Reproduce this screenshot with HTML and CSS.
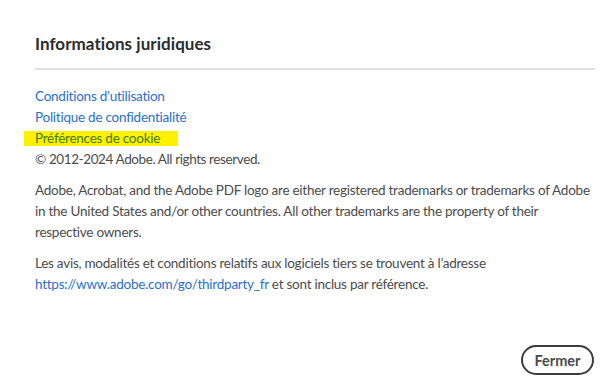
FILE: index.html
```html
<!DOCTYPE html>
<html lang="fr">
<head>
<meta charset="utf-8">
<title>Informations juridiques</title>
<link rel="stylesheet" href="styles.css">
</head>
<body>
<div class="dialog">
  <h1 class="title">Informations juridiques</h1>
  <hr class="divider">
  <div class="content">
    <ul class="links">
      <li><a href="#">Conditions d’utilisation</a></li>
      <li><a href="#">Politique de confidentialité</a></li>
      <li><a href="#" class="hl">Préférences de cookie</a></li>
    </ul>
    <p class="copy">© 2012-2024 Adobe. All rights reserved.</p>
    <p class="para">Adobe, Acrobat, and the Adobe PDF logo are either registered trademarks or trademarks of Adobe in the United States and/or other countries. All other trademarks are the property of their respective owners.</p>
    <p class="para">Les avis, modalités et conditions relatifs aux logiciels tiers se trouvent à l’adresse <a href="#">https://www.adobe.com/go/thirdparty_fr</a> et sont inclus par référence.</p>
  </div>
  <div class="footer">
    <button class="btn">Fermer</button>
  </div>
</div>
</body>
</html>
```
FILE: styles.css
```css
html, body {
  margin: 0;
  padding: 0;
  background: #ffffff;
}
.dialog {
  font-family: Lato, "Noto Sans", sans-serif;
  color: #4b4b4b;
  padding: 32px 14px 0 35px;
}
.title {
  margin: 0;
  font-size: 17px;
  line-height: 24px;
  font-weight: 700;
  color: #2c2c2c;
  letter-spacing: 0.05px;
}
.divider {
  border: 0;
  height: 2px;
  background: #e1e1e1;
  margin: 12px 0 0 0;
}
.content {
  padding-top: 16px;
  font-size: 13.5px;
  letter-spacing: -0.25px;
  line-height: 21px;
  padding-right: 2px;
}
.links {
  list-style: none;
  margin: 0;
  padding: 0;
}
a {
  color: #2a6fd0;
  text-decoration: none;
}
.hl {
  background: #fff200;
  color: #3f7a14;
  padding: 0 18px 0 11px;
  margin-left: -11px;
  display: inline-block;
  line-height: 15px;
}
.copy {
  margin: 0;
  letter-spacing: -0.4px;
}
.para {
  margin: 10px 0 0 0;
}
.footer {
  display: flex;
  justify-content: flex-end;
  margin-top: 50px;
  padding-right: 1px;
}
.btn {
  font-family: Lato, "Noto Sans", sans-serif;
  font-size: 14.5px;
  font-weight: 700;
  color: #4b4b4b;
  background: #ffffff;
  border: 2px solid #3c3c3c;
  border-radius: 16px;
  width: 73px;
  height: 30px;
  padding: 0;
}
```
